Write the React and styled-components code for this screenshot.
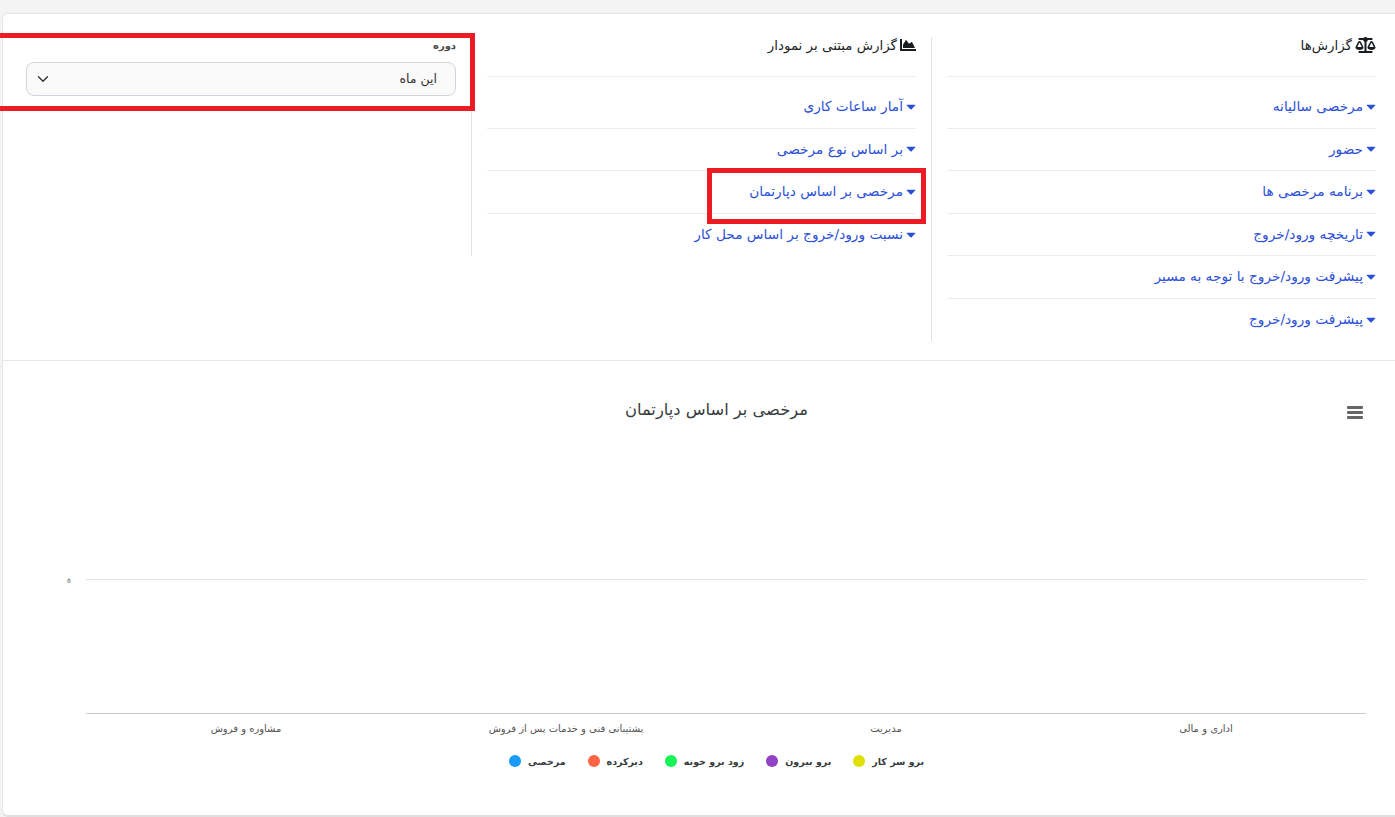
import React from 'react';
import styled, { createGlobalStyle } from 'styled-components';
import { FaBalanceScale, FaChartArea, FaCaretDown } from 'react-icons/fa';
import { ChevronDown } from 'lucide-react';

const Global = createGlobalStyle`
  html, body { margin: 0; padding: 0; background: #f3f3f3; }
  body { font-family: "DejaVu Sans", "Noto Sans", sans-serif; overflow: hidden; }
`;

const Page = styled.div`
  height: 817px;
  padding: 13px 0 0 2px;
  box-sizing: border-box;
  position: relative;
  overflow: hidden;
`;

const Card = styled.div`
  height: 100%;
  box-sizing: border-box;
  background: #fff;
  border: 1px solid #e6e6e6;
  border-bottom: 2px solid #dedede;
  border-right: 0;
  border-radius: 6px 0 0 6px;
  direction: rtl;
  display: flex;
  flex-direction: column;
`;

const Top = styled.div`
  height: 347px;
  box-sizing: border-box;
  padding: 23px 4px 0 8px;
  display: grid;
  grid-template-columns: 460px 460px 460px;
  align-items: start;
  border-bottom: 1px solid #e6e6e6;
`;

const Col = styled.div`
  padding: 0 15px;
  border-left: ${({ $bordered }) => ($bordered ? '1px solid #e3e3e3' : '0')};
  box-sizing: border-box;
`;

const ColTitle = styled.div`
  height: 39px;
  display: flex;
  align-items: flex-start;
  gap: 3px;
  font-size: 13.4px;
  line-height: 17px;
  color: #212529;
  border-bottom: 1px solid #ececec;
  svg { flex: none; color: #1a1d20; height: 16px; width: ${({ $iconWidth }) => $iconWidth}px; }
`;

const List = styled.div`
  padding-top: 9px;
`;

const Row = styled.a`
  display: flex;
  align-items: center;
  gap: 3px;
  height: 42.5px;
  box-sizing: border-box;
  font-size: 13.7px;
  padding-bottom: 1px;
  color: #2b50d8;
  border-bottom: ${({ $last }) => ($last ? '0' : '1px solid #ececec')};
  svg { width: 10px; height: 15px; flex: none; color: #2b50d8; }
`;

const Label = styled.div`
  font-size: 10px;
  font-weight: 700;
  color: #4a4a4a;
  line-height: 14px;
  margin-bottom: 9px;
  margin-top: 2px;
`;

const Select = styled.div`
  height: 34px;
  box-sizing: border-box;
  border: 1px solid #d3d3de;
  border-radius: 8px;
  background: #fafafa;
  padding: 0 18px 2px 7px;
  display: flex;
  align-items: center;
  justify-content: space-between;
  font-size: 12.5px;
  color: #333;
  svg { color: #333; margin-top: 2px; }
`;

const ChartArea = styled.div`
  flex: 1;
  position: relative;
  direction: ltr;
  display: flex;
  flex-direction: column;
`;

const ChartHead = styled.div`
  height: 198px;
  display: flex;
  justify-content: center;
  padding: 39px 0 0 35px;
  box-sizing: border-box;
`;

const ChartTitle = styled.div`
  direction: rtl;
  font-size: 16.3px;
  line-height: 20px;
  color: #373d3f;
`;

const Burger = styled.div`
  position: absolute;
  top: 45px;
  right: 32px;
  width: 16px;
  display: flex;
  flex-direction: column;
  gap: 2px;
  span { height: 3px; background: #666; border-radius: 1px; }
`;

const Plot = styled.svg`
  display: block;
  width: 1392px;
  height: 180px;
  text { font-family: "DejaVu Sans", sans-serif; }
`;

const Legend = styled.div`
  direction: rtl;
  display: flex;
  justify-content: center;
  gap: 22px;
  margin-top: 16px;
  padding-left: 35px;
`;

const LegendItem = styled.div`
  display: flex;
  align-items: center;
  gap: 7px;
  font-size: 9.5px;
  font-weight: 700;
  line-height: 14px;
  color: #373d3f;
`;

const Dot = styled.span`
  width: 12px;
  height: 12px;
  border-radius: 50%;
  background: ${({ $color }) => $color};
  margin-top: -3px;
`;

const RedBox = styled.div`
  position: absolute;
  border: 5px solid #ed1c24;
  box-sizing: border-box;
  left: ${({ $x }) => $x}px;
  top: ${({ $y }) => $y}px;
  width: ${({ $w }) => $w}px;
  height: ${({ $h }) => $h}px;
  pointer-events: none;
`;

const reports = [
  'مرخصی سالیانه',
  'حضور',
  'برنامه مرخصی ها',
  'تاریخچه ورود/خروج',
  'پیشرفت ورود/خروج با توجه به مسیر',
  'پیشرفت ورود/خروج',
];

const chartReports = [
  'آمار ساعات کاری',
  'بر اساس نوع مرخصی',
  'مرخصی بر اساس دپارتمان',
  'نسبت ورود/خروج بر اساس محل کار',
];

const categories = [
  { x: 243, name: 'مشاوره و فروش' },
  { x: 563, name: 'پشتیبانی فنی و خدمات پس از فروش' },
  { x: 883, name: 'مدیریت' },
  { x: 1203, name: 'اداری و مالی' },
];

const legend = [
  { name: 'برو سر کار', color: '#e0e000' },
  { name: 'برو بیرون', color: '#9242c4' },
  { name: 'زود برو خونه', color: '#14f455' },
  { name: 'دیرکرده', color: '#ff6445' },
  { name: 'مرخصی', color: '#1a9bfb' },
];

function LinkList({ items }) {
  return (
    <List>
      {items.map(item => (
        <Row key={item} $last={item === items[items.length - 1]}>
          <FaCaretDown />
          {item}
        </Row>
      ))}
    </List>
  );
}

export default function App() {
  return (
    <Page>
      <Global />
      <Card>
        <Top>
          <Col $bordered>
            <ColTitle $iconWidth={21}><FaBalanceScale />گزارش‌ها</ColTitle>
            <LinkList items={reports} />
          </Col>
          <Col $bordered>
            <ColTitle $iconWidth={16}><FaChartArea />گزارش مبتنی بر نمودار</ColTitle>
            <LinkList items={chartReports} />
          </Col>
          <Col>
            <Label>دوره</Label>
            <Select>
              این ماه
              <ChevronDown size={18} strokeWidth={1.8} />
            </Select>
          </Col>
        </Top>
        <ChartArea>
          <ChartHead>
            <ChartTitle>مرخصی بر اساس دپارتمان</ChartTitle>
          </ChartHead>
          <Burger><span /><span /><span /></Burger>
          <Plot viewBox="0 0 1392 180">
            <line x1="83" x2="1363" y1="20.5" y2="20.5" stroke="#e4e4e4" />
            <line x1="83" x2="1363" y1="154.5" y2="154.5" stroke="#c8ced6" />
            <text x="66" y="24" fontSize="7" textAnchor="middle" fill="#4a5a6a">٥</text>
            {categories.map(c => (
              <text key={c.x} x={c.x} y="173" fontSize="10" textAnchor="middle" direction="rtl" fill="#555">{c.name}</text>
            ))}
          </Plot>
          <Legend>
            {legend.map(l => (
              <LegendItem key={l.name}>
                {l.name}
                <Dot $color={l.color} />
              </LegendItem>
            ))}
          </Legend>
        </ChartArea>
      </Card>
      <RedBox $x={-6} $y={33} $w={481} $h={78} />
      <RedBox $x={707} $y={168} $w={219} $h={56} />
    </Page>
  );
}
